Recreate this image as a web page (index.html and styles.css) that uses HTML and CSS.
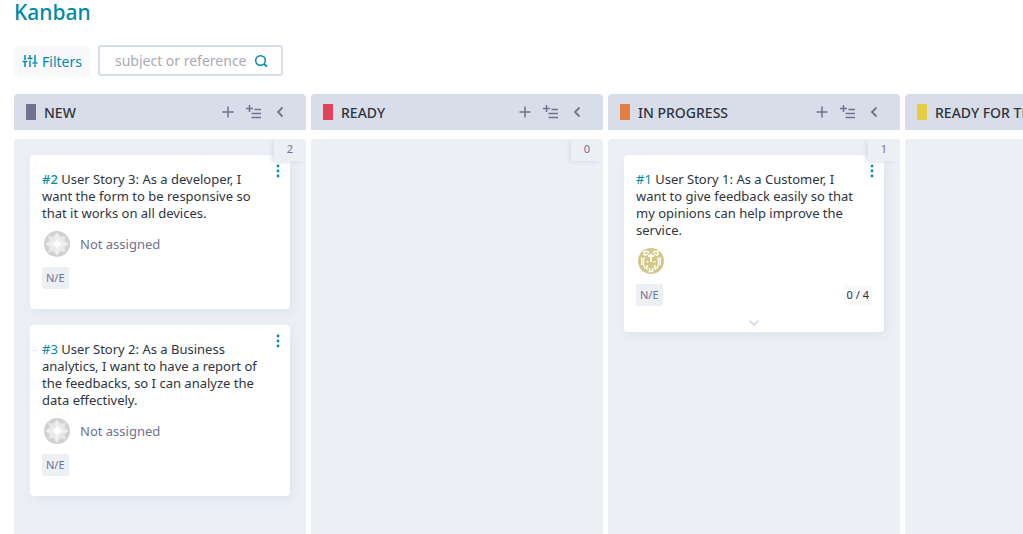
FILE: index.html
```html
<!DOCTYPE html>
<html lang="en">
<head>
<meta charset="utf-8">
<meta name="viewport" content="width=device-width, initial-scale=1">
<title>Kanban</title>
<link rel="stylesheet" href="styles.css">
</head>
<body>
<svg class="sprite" aria-hidden="true">
  <symbol id="i-plus" viewBox="0 0 12 12"><path d="M6 0.500v11M0.500 6h11" fill="none" stroke="currentColor" stroke-width="1.500"/></symbol>
  <symbol id="i-bulk" viewBox="0 0 16 14"><path d="M3.500 0v7M0 3.500h7M8.500 4.500h6.500M5.500 8.500h9.500M5.500 12.500h9.500" fill="none" stroke="currentColor" stroke-width="1.500"/></symbol>
  <symbol id="i-left" viewBox="0 0 12 12"><path d="M8.500 1.500L4 6L8.500 10.500" fill="none" stroke="currentColor" stroke-width="1.800"/></symbol>
  <symbol id="i-down" viewBox="0 0 12 8"><path d="M1.500 1.500L6 6l4.500-4.500" fill="none" stroke="currentColor" stroke-width="2"/></symbol>
  <symbol id="i-dots" viewBox="0 0 4 14"><g fill="currentColor"><circle cx="2" cy="2" r="1.400"/><circle cx="2" cy="7" r="1.400"/><circle cx="2" cy="12" r="1.400"/></g></symbol>
  <symbol id="i-star" viewBox="0 0 26 26">
    <circle cx="13" cy="13" r="13" fill="#d0d0d0"/>
    <path d="M13 1l4 4.500 5-1 -1 5 4 3.500-4 3.500 1 5-5-1-4 4.500-4-4.500-5 1 1-5L1 13l4-3.500-1-5 5 1Z" fill="#e2e2e2"/>
    <path d="M13 2l3 5.500L13 13l-3-5.500ZM13 24l3-5.500L13 13l-3 5.500ZM2 13l5.500-3L13 13l-5.500 3ZM24 13l-5.500-3L13 13l5.500 3Z" fill="#efefef"/>
    <path d="M5.500 5.500l5.500 2L13 13l-5.500-2ZM20.500 5.500l-5.500 2L13 13l5.500-2ZM5.500 20.500l5.500-2L13 13l-5.500 2ZM20.500 20.500l-5.500-2L13 13l5.500 2Z" fill="#eaeaea"/>
    <path d="M13 8l1.200 2.800L17 9.500l-1.500 2.500L18 13l-2.500 1 1.500 2.500-2.800-1.300L13 18l-1.200-2.800L9 16.500l1.500-2.500L8 13l2.500-1L9 9.500l2.800 1.300Z" fill="#fff"/>
  </symbol>
  <symbol id="i-owl" viewBox="0 0 26 26">
    <circle cx="13" cy="13" r="13" fill="#d2c688"/>
    <g fill="none" stroke="#fffdf2" stroke-width="1.400">
      <path d="M6 7V3.500h4l1 2M20 7V3.500h-4l-1 2M6 7.500l4-1.500M20 7.500L16 6M3.700 9v8M22.300 9v8M6.500 9.500L5.500 12v5l2 3.500M19.500 9.500l1 2.500v5l-2 3.500"/>
      <path d="M10 8h6M13 6v8" stroke-width="2"/>
      <path d="M8.500 13.700h2M15.500 13.700h2M8.500 22l1-5M17.500 22l-1-5M11.500 20v3.500h3V20" stroke-width="1.600"/>
    </g>
  </symbol>
</svg>

<main class="page">
  <h1 class="title">Kanban</h1>

  <form class="toolbar">
    <button class="filters" type="button">
      <svg class="filters-icon" viewBox="0 0 16 14" aria-hidden="true"><path d="M3 1v5M3 8v5M8 1v3M8 6.500V13M13 1v7M13 10.500V13M0.500 7.500h5M5.500 4.500h5M10.500 9h5" fill="none" stroke="currentColor" stroke-width="1.500"/></svg>
      Filters
    </button>
    <div class="search">
      <input class="search-input" type="text" placeholder="subject or reference" aria-label="subject or reference">
      <button class="search-button" type="button" aria-label="Search">
        <svg class="search-icon" viewBox="0 0 14 14" aria-hidden="true"><circle cx="6.500" cy="6.500" r="4.800" fill="none" stroke="currentColor" stroke-width="1.500"/><path d="M10 10l3 2.500" stroke="currentColor" stroke-width="1.700"/></svg>
      </button>
    </div>
  </form>

  <div class="board">
    <section class="column">
      <header class="column-head">
        <span class="swatch swatch-new"></span>
        <h2 class="column-name">NEW</h2>
        <button class="tool" type="button" aria-label="Add"><svg class="icon-plus"><use href="#i-plus"/></svg></button>
        <button class="tool" type="button" aria-label="Add in bulk"><svg class="icon-bulk"><use href="#i-bulk"/></svg></button>
        <button class="tool" type="button" aria-label="Fold column"><svg class="icon-left"><use href="#i-left"/></svg></button>
      </header>
      <div class="column-body">
        <span class="counter">2</span>
        <article class="card">
          <button class="card-menu" type="button" aria-label="Options"><svg class="icon-dots"><use href="#i-dots"/></svg></button>
          <p class="card-text"><a class="ref ref-strong" href="#us2">#2</a> User Story 3: As a developer, I want the form to be responsive so that it works on all devices.</p>
          <div class="owner"><svg class="avatar"><use href="#i-star"/></svg>Not assigned</div>
          <div class="card-foot"><span class="points">N/E</span></div>
        </article>
        <article class="card">
          <button class="card-menu" type="button" aria-label="Options"><svg class="icon-dots"><use href="#i-dots"/></svg></button>
          <p class="card-text"><a class="ref" href="#us3">#3</a> User Story 2: As a Business analytics, I want to have a report of the feedbacks, so I can analyze the data effectively.</p>
          <div class="owner"><svg class="avatar"><use href="#i-star"/></svg>Not assigned</div>
          <div class="card-foot"><span class="points">N/E</span></div>
        </article>
      </div>
    </section>

    <section class="column">
      <header class="column-head">
        <span class="swatch swatch-ready"></span>
        <h2 class="column-name">READY</h2>
        <button class="tool" type="button" aria-label="Add"><svg class="icon-plus"><use href="#i-plus"/></svg></button>
        <button class="tool" type="button" aria-label="Add in bulk"><svg class="icon-bulk"><use href="#i-bulk"/></svg></button>
        <button class="tool" type="button" aria-label="Fold column"><svg class="icon-left"><use href="#i-left"/></svg></button>
      </header>
      <div class="column-body"><span class="counter">0</span></div>
    </section>

    <section class="column">
      <header class="column-head">
        <span class="swatch swatch-progress"></span>
        <h2 class="column-name">IN PROGRESS</h2>
        <button class="tool" type="button" aria-label="Add"><svg class="icon-plus"><use href="#i-plus"/></svg></button>
        <button class="tool" type="button" aria-label="Add in bulk"><svg class="icon-bulk"><use href="#i-bulk"/></svg></button>
        <button class="tool" type="button" aria-label="Fold column"><svg class="icon-left"><use href="#i-left"/></svg></button>
      </header>
      <div class="column-body">
        <span class="counter">1</span>
        <article class="card card-foldable">
          <button class="card-menu" type="button" aria-label="Options"><svg class="icon-dots"><use href="#i-dots"/></svg></button>
          <p class="card-text"><a class="ref" href="#us1">#1</a> User Story 1: As a Customer, I want to give feedback easily so that my opinions can help improve the service.</p>
          <div class="owner"><svg class="avatar"><use href="#i-owl"/></svg></div>
          <div class="card-foot"><span class="points">N/E</span><span class="tasks">0 / 4</span></div>
          <button class="unfold" type="button" aria-label="Show tasks"><svg class="icon-down"><use href="#i-down"/></svg></button>
        </article>
      </div>
    </section>

    <section class="column">
      <header class="column-head">
        <span class="swatch swatch-test"></span>
        <h2 class="column-name">READY FOR TEST</h2>
      </header>
      <div class="column-body"></div>
    </section>
  </div>
</main>
</body>
</html>
```
FILE: styles.css
```css
* { box-sizing: border-box; }

body {
  margin: 0;
  background: #fff;
  color: #2e3440;
  font-family: "Noto Sans", "Open Sans", sans-serif;
  font-size: 13px;
  line-height: 17px;
  overflow: hidden;
}

button {
  margin: 0;
  padding: 0;
  border: 0;
  background: none;
  color: inherit;
  font: inherit;
  cursor: pointer;
}

svg { display: block; flex: none; }

.sprite { position: absolute; width: 0; height: 0; }

.page {
  display: flex;
  flex-direction: column;
  min-height: 100vh;
  padding-left: 14px;
  overflow: hidden;
}

.title {
  margin: 0 0 20px;
  color: #008aa8;
  font-size: 21px;
  font-weight: 500;
  line-height: 25px;
}

.toolbar {
  display: flex;
  gap: 8px;
  margin-bottom: 17px;
  font-size: 14px;
}

.filters {
  display: flex;
  align-items: center;
  gap: 4px;
  height: 32px;
  padding: 0 8px;
  border-radius: 4px;
  background: #f9f9fb;
  color: #008aa8;
}

.filters-icon { width: 16px; height: 14px; }

.search {
  display: flex;
  align-items: center;
  width: 185px;
  height: 31px;
  padding: 0 13px 0 15px;
  border: 2px solid #d8dee9;
  border-radius: 3px;
}

.search-input {
  flex: 1;
  min-width: 0;
  padding: 0;
  border: 0;
  outline: 0;
  background: none;
  color: inherit;
  font: inherit;
}

.search-input::placeholder { color: #a9a9b3; opacity: 1; }

.search-button { color: #008aa8; }

.search-icon { width: 14px; height: 14px; }

.board {
  display: flex;
  flex: 1;
  gap: 5px;
}

.column {
  display: flex;
  flex: 0 0 292px;
  flex-direction: column;
  gap: 9px;
}

.column-head {
  display: flex;
  align-items: center;
  gap: 12px;
  height: 36px;
  padding: 0 20px 0 12px;
  border-radius: 4px 4px 0 0;
  background: #d8dee9;
}

.swatch { width: 10px; height: 16px; }
.swatch-new { background: #70728f; }
.swatch-ready { background: #e44057; }
.swatch-progress { background: #e47c40; }
.swatch-test { background: #e4ce40; }

.column-name {
  flex: 1;
  margin: 0 0 0 -4px;
  font-size: 14px;
  font-weight: 500;
  white-space: nowrap;
}

.tool { color: #70728f; }

.icon-plus { width: 12px; height: 12px; }
.icon-bulk { width: 16px; height: 14px; }
.icon-left { width: 12px; height: 12px; }
.icon-down { width: 12px; height: 8px; }
.icon-dots { width: 4px; height: 14px; }

.column-body {
  position: relative;
  display: flex;
  flex: 1;
  flex-direction: column;
  gap: 16px;
  padding: 16px;
  border-radius: 4px 4px 0 0;
  background: #eceff4;
}

.counter {
  position: absolute;
  z-index: 1;
  top: 0;
  right: 0;
  width: 32px;
  height: 22px;
  border-radius: 0 4px 0 0;
  background: #eceff4;
  box-shadow: -3px 2px 4px -1px #d8dee9;
  color: #70728f;
  font-size: 11px;
  line-height: 20px;
  text-align: center;
}

.card {
  position: relative;
  padding: 16px 12px 20px;
  border-radius: 4px;
  background: #fff;
  box-shadow: 2px 4px 8px #dfe4ee;
}

.card-foldable { padding-bottom: 5px; }

.card-menu {
  position: absolute;
  top: 9px;
  right: 10px;
  color: #008aa8;
}

.card-text { margin: 0 8px 9px 0; }

.ref { color: #008aa8; text-decoration: none; }
.ref-strong { font-weight: 500; }

.owner {
  display: flex;
  align-items: center;
  gap: 10px;
  margin-bottom: 10px;
  padding-left: 2px;
  color: #70728f;
}

.avatar { width: 26px; height: 26px; }

.card-foot {
  display: flex;
  align-items: center;
  justify-content: space-between;
  font-size: 11px;
}

.points {
  padding: 0 4px;
  border-radius: 2px;
  background: #eceff4;
  color: #70728f;
  line-height: 22px;
}

.tasks {
  padding: 0 3px;
  background: #f9f9fb;
  line-height: 20px;
}

.unfold {
  display: block;
  margin: 13px auto 0;
  color: #d8dee9;
}
```
